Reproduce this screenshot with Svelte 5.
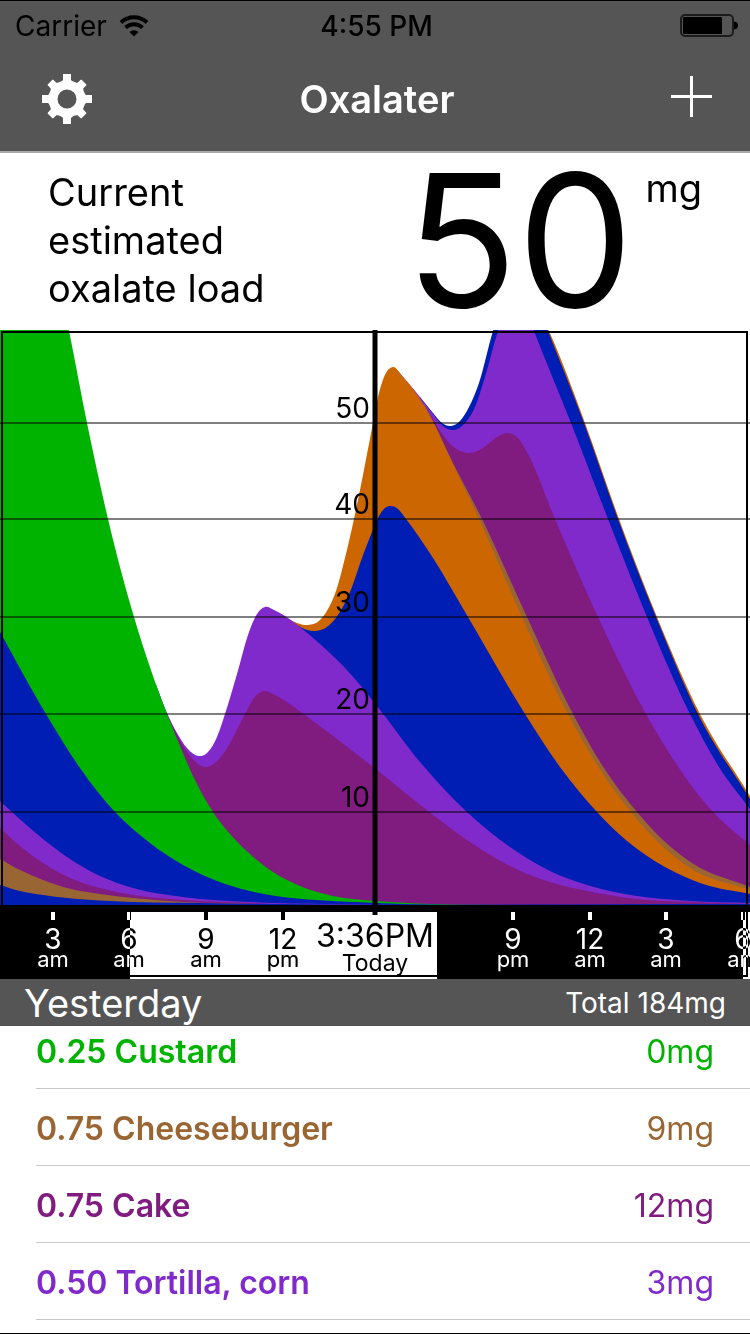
<script>
	const green = '#00b300';
	const brown = '#996633';
	const plum = '#801b80';
	const violet = '#802acc';
	const blue = '#001eb4';
	const orange = '#cc6600';

	const baseline = 905;

	// upper edge of every food in the stack, tallest first
	const layers = [
		{
			color: orange,
			points: [[500, 310], [520, 290], [540, 312], [549, 331], [585, 423], [619, 519], [657, 617], [700, 714], [750, 796]]
		},
		{
			color: blue,
			points: [[420, 397], [433, 413], [442, 423], [451, 426], [460, 421], [469, 407], [479, 383], [493, 331], [504, 300], [520, 285], [537, 303], [548, 331], [584, 423], [618, 519], [656, 617], [698, 714], [750, 799]]
		},
		{
			color: violet,
			points: [[398, 371], [420, 397], [433, 414], [443, 426], [454, 430], [465, 423], [475, 407], [485, 377], [498, 331], [507, 305], [517, 295], [526, 310], [534, 331], [571, 423], [608, 519], [647, 617], [690, 714], [719, 767], [750, 809]]
		},
		{
			color: plum,
			points: [[425, 406], [433, 419], [443, 435], [455, 448], [469, 453], [483, 448], [497, 437], [508, 433], [518, 438], [528, 454], [555, 519], [598, 617], [646, 714], [713, 812], [750, 845]]
		},
		{
			color: brown,
			points: [[424, 404], [433, 421], [450, 457], [482, 519], [527, 617], [573, 714], [602, 765], [637, 812], [663, 840], [692, 863], [750, 887]]
		},
		{
			color: orange,
			points: [[276, 612], [285, 617], [297, 623], [308, 625], [320, 620], [328, 609], [337, 588], [345, 558], [354, 519], [373, 423], [378, 397], [384, 377], [393, 367], [403, 377], [420, 399], [432, 420], [450, 458], [479, 519], [522, 617], [568, 714], [597, 765], [631, 812], [658, 842], [690, 868], [750, 890]]
		},
		{
			color: blue,
			points: [[276, 612], [285, 617], [297, 625], [307, 630], [316, 631], [327, 627], [338, 615], [350, 592], [362, 558], [372, 532], [379, 516], [385, 508], [391, 506], [398, 509], [406, 519], [433, 558], [468, 617], [525, 714], [560, 767], [597, 812], [627, 841], [665, 867], [703, 884], [750, 894]]
		},
		{
			color: violet,
			points: [[156, 685], [167, 713], [177, 733], [187, 748], [198, 756], [208, 752], [217, 737], [225, 714], [237, 674], [249, 632], [257, 614], [265, 607], [274, 610], [285, 616], [300, 627], [320, 644], [347, 670], [377, 706], [420, 762], [467, 812], [510, 847], [550, 871], [587, 885], [637, 896], [690, 901], [750, 903]]
		},
		{
			color: plum,
			points: [[156, 685], [167, 714], [177, 735], [187, 752], [197, 763], [205, 767], [215, 763], [227, 748], [245, 714], [254, 698], [264, 691], [275, 695], [302, 713], [337, 739], [377, 770], [428, 811], [470, 842], [510, 866], [550, 882], [587, 891], [637, 899], [690, 902], [750, 904]]
		},
		{
			color: green,
			points: [[0, 40], [50, 245], [69, 331], [87, 423], [108, 519], [134, 617], [167, 714], [180, 746], [193, 776], [213, 812], [230, 834], [250, 854], [273, 872], [300, 886], [333, 896], [377, 901], [430, 904], [500, 905]]
		},
		{
			color: blue,
			points: [[0, 632], [46, 714], [80, 768], [115, 812], [150, 843], [183, 865], [217, 881], [250, 891], [283, 897], [317, 900], [377, 903], [750, 904]]
		},
		{
			color: violet,
			points: [[0, 801], [12, 812], [37, 834], [67, 857], [100, 876], [133, 888], [183, 897], [250, 902], [330, 904], [400, 905]]
		},
		{
			color: plum,
			points: [[0, 828], [20, 846], [43, 863], [70, 878], [100, 888], [133, 895], [183, 900], [250, 903], [300, 905]]
		},
		{
			color: brown,
			points: [[0, 859], [20, 870], [43, 880], [67, 888], [100, 894], [133, 898], [183, 902], [250, 904]]
		},
		{
			color: blue,
			points: [[0, 885], [20, 891], [43, 895], [67, 898], [110, 901], [200, 903], [750, 904]]
		}
	];

	const gridLines = [
		{ label: 50, y: 423 },
		{ label: 40, y: 519 },
		{ label: 30, y: 617 },
		{ label: 20, y: 714 },
		{ label: 10, y: 812 }
	];

	const hours = [
		{ x: 53, hour: 3, half: 'am' },
		{ x: 129, hour: 6, half: 'am' },
		{ x: 206, hour: 9, half: 'am' },
		{ x: 283, hour: 12, half: 'pm' },
		{ x: 513, hour: 9, half: 'pm' },
		{ x: 590, hour: 12, half: 'am' },
		{ x: 666, hour: 3, half: 'am' },
		{ x: 743, hour: 6, half: 'am' }
	];

	const foods = [
		{ name: '0.25 Custard', load: 0, color: green },
		{ name: '0.75 Cheeseburger', load: 9, color: brown },
		{ name: '0.75 Cake', load: 12, color: plum },
		{ name: '0.50 Tortilla, corn', load: 3, color: violet }
	];

	// slope at point i, weighted by the width of the segments on both sides
	function slope(points, i) {
		const rise = (a, b) => (b[1] - a[1]) / (b[0] - a[0]);
		if (i === 0) return rise(points[0], points[1]);
		if (i === points.length - 1) return rise(points[i - 1], points[i]);
		const before = points[i][0] - points[i - 1][0];
		const after = points[i + 1][0] - points[i][0];
		return (
			(after * rise(points[i - 1], points[i]) + before * rise(points[i], points[i + 1])) /
			(before + after)
		);
	}

	// smooth curve through the points, closed along the baseline
	function area(points) {
		let d = `M${points[0][0]} ${baseline}L${points[0][0]} ${points[0][1]}`;
		for (let i = 0; i < points.length - 1; i++) {
			const [x1, y1] = points[i];
			const [x2, y2] = points[i + 1];
			const step = (x2 - x1) / 3;
			d += `C${x1 + step} ${y1 + slope(points, i) * step} ${x2 - step} ${y2 - slope(points, i + 1) * step} ${x2} ${y2}`;
		}
		return d + `V${baseline}Z`;
	}
</script>

<main>
	<header>
		<div class="status">
			<div class="carrier">
				<span>Carrier</span>
				<svg width="30" height="24" viewBox="0 0 30 24" aria-hidden="true">
					<g fill="none" stroke="#000" stroke-width="4">
						<path d="M2 8.5a19 19 0 0 1 26 0" />
						<path d="M6.5 13.5a12.500 12.500 0 0 1 17 0" />
					</g>
					<path d="M10.500 18a6.500 6.500 0 0 1 9 0l-4.500 4.500z" />
				</svg>
			</div>
			<span class="clock">4:55 PM</span>
			<svg class="battery" width="58" height="24" viewBox="0 0 58 24" aria-hidden="true">
				<rect x="1" y="1" width="52" height="21" rx="4" fill="none" stroke="#1c1c1c" stroke-width="2" />
				<rect x="3" y="3" width="39" height="17" rx="1" />
				<path d="M54 7.500q4 .5 4 4t-4 4z" />
			</svg>
		</div>
		<nav>
			<button aria-label="Settings">
				<svg width="50" height="50" viewBox="-25 -25 50 50">
					<circle r="14" fill="none" stroke="#fff" stroke-width="9" />
					{#each [0, 90, 180, 270] as angle}
						<g fill="#fff" transform="rotate({angle})">
							<path d="M-4-25h8v6l3 3h-14l3-3z" />
							<path transform="rotate(45)" d="M-4-23q0-1 1-1h6q1 0 1 1v4l3 3h-14l3-3z" />
						</g>
					{/each}
				</svg>
			</button>
			<h1>Oxalater</h1>
			<button class="add" aria-label="Add food">
				<svg width="42" height="46" viewBox="0 0 42 46">
					<path d="M21.500 0v41M1 20.500h41" stroke="#fff" stroke-width="3" />
				</svg>
			</button>
		</nav>
	</header>

	<section class="current">
		<p>Current<br />estimated<br />oxalate load</p>
		<div class="load">
			<strong>50</strong>
			<span>mg</span>
		</div>
	</section>

	<svg class="chart" viewBox="0 330 750 649" role="img" aria-label="Estimated oxalate load over time">
		{#each layers as layer}
			<path d={area(layer.points)} fill={layer.color} />
		{/each}

		{#each gridLines as line}
			<path class="grid" d="M0 {line.y}H750" />
			<text class="value" x="370" y={line.y - 5}>{line.label}</text>
		{/each}

		<!-- night and day strip -->
		<rect y="905" width="750" height="74" />
		<rect x="130" y="912" width="307" height="67" fill="#fff" />
		<rect x="743" y="912" width="7" height="67" fill="#fff" />
		<rect class="frame" x="2" y="332" width="745" height="644" />

		<!-- inverts against whatever half of the strip it sits on -->
		<g class="hours">
			{#each hours as h}
				<rect x={h.x - 2} y="912" width="4" height="8" />
				<text class="hour" x={h.x} y="949">{h.hour}</text>
				<text class="half" x={h.x} y="967">{h.half}</text>
			{/each}
		</g>

		<path class="now" d="M375 330V915" />
		<text class="time" x="375" y="947">3:36PM</text>
		<text class="day" x="375" y="971">Today</text>
	</svg>

	<section class="log">
		<div class="heading">
			<h2>Yesterday</h2>
			<span>Total 184mg</span>
		</div>
		<ul>
			{#each foods as food}
				<li style="color: {food.color}">
					<b>{food.name}</b>
					<span>{food.load}mg</span>
				</li>
			{/each}
		</ul>
	</section>
</main>

<style>
	:global(body) {
		background: #fff;
	}

	main {
		box-sizing: border-box;
		min-height: 100vh;
		border-top: 1px solid #000;
		border-bottom: 1px solid #000;
		font-family: Inter, 'Liberation Sans', sans-serif;
		color: #000;
	}

	h1,
	h2,
	p,
	ul {
		margin: 0;
		padding: 0;
	}

	header {
		background: #555;
		border-bottom: 2px solid #aaa;
	}

	.status {
		display: grid;
		grid-template-columns: 1fr auto 1fr;
		align-items: center;
		height: 50px;
		padding: 0 12px 0 15px;
		font-size: 28px;
	}

	.carrier {
		display: flex;
		align-items: center;
		gap: 12px;
	}

	.clock {
		font-weight: 500;
	}

	.battery {
		justify-self: end;
	}

	nav {
		display: grid;
		grid-template-columns: 1fr auto 1fr;
		align-items: center;
		height: 96px;
		padding: 0 38px 4px 42px;
	}

	button {
		display: flex;
		padding: 0;
		border: 0;
		background: none;
	}

	.add {
		justify-self: end;
	}

	h1 {
		font-size: 38px;
		font-weight: 600;
		color: #fff;
	}

	.current {
		display: flex;
		justify-content: space-between;
		height: 177px;
		padding: 0 48px;
		font-size: 38px;
		line-height: 48px;
	}

	.current p {
		padding-top: 15px;
	}

	.load {
		display: flex;
		gap: 12px;
	}

	.load strong {
		font-size: 184px;
		font-weight: 400;
		line-height: 174px;
	}

	.load span {
		padding-top: 11px;
	}

	.chart {
		display: block;
		width: 100%;
	}

	.grid {
		stroke: #000;
		stroke-opacity: 0.5;
		stroke-width: 2px;
	}

	.frame {
		fill: none;
		stroke: #000;
		stroke-width: 2px;
	}

	.now {
		stroke: #000;
		stroke-width: 5px;
	}

	.value {
		font-size: 28px;
		text-anchor: end;
	}

	.hours {
		fill: #fff;
		mix-blend-mode: difference;
	}

	.hour,
	.half,
	.time,
	.day {
		text-anchor: middle;
	}

	.hour {
		font-size: 28px;
	}

	.half {
		font-size: 22px;
	}

	.day {
		font-size: 23px;
	}

	.time {
		font-size: 32px;
	}

	.heading {
		position: relative;
		display: flex;
		align-items: center;
		justify-content: space-between;
		height: 47px;
		padding: 0 24px;
		background: #555;
		color: #fff;
		font-size: 28px;
	}

	h2 {
		font-size: 38px;
		line-height: 46px;
		font-weight: 400;
	}

	/* first row is scrolled partly under the heading */
	ul {
		margin-top: -14px;
		list-style: none;
	}

	li {
		display: flex;
		align-items: center;
		justify-content: space-between;
		height: 74px;
		margin-left: 36px;
		padding: 2px 36px 0 0;
		border-bottom: 1px solid #c8c7cc;
		font-size: 32px;
	}

	b {
		font-weight: 600;
	}
</style>
